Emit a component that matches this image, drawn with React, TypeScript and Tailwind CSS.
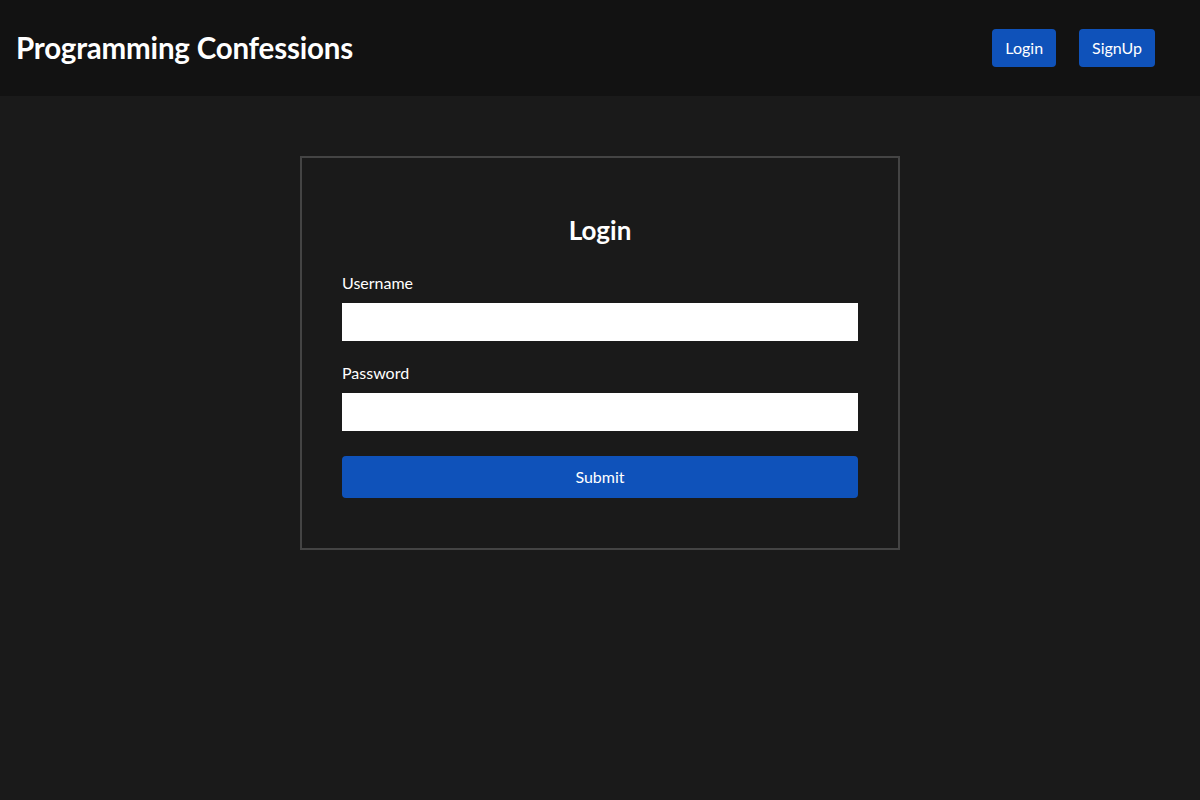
import React, { useState } from 'react';

const App: React.FC = () => {
  const [username, setUsername] = useState('');
  const [password, setPassword] = useState('');

  const handleSubmit = (e: React.FormEvent) => {
    e.preventDefault();
  };

  return (
    <div className="min-h-screen bg-[#1a1a1a] text-white font-['Lato','Liberation_Sans',sans-serif]">
      <header className="h-[96px] bg-[#121212] flex items-center justify-between pl-4 pr-[45px]">
        <h1 className="text-[29.5px] font-bold tracking-[-0.2px]">Programming Confessions</h1>
        <nav className="flex items-center gap-[23px]">
          <button className="h-[38px] px-[13px] rounded bg-[#0f52ba] text-[16px]">Login</button>
          <button className="h-[38px] px-[13px] rounded bg-[#0f52ba] text-[16px]">SignUp</button>
        </nav>
      </header>

      <main className="flex justify-center pt-[60px]">
        <form
          onSubmit={handleSubmit}
          className="w-[600px] border-2 border-[#444] px-10 pt-[52px] pb-[50px]"
        >
          <h2 className="text-[26px] font-bold text-center leading-[40px] mb-[21px]">Login</h2>
          <label className="block text-[16px] leading-[24px] mb-[8px]">Username</label>
          <input
            type="text"
            value={username}
            onChange={(e) => setUsername(e.target.value)}
            className="w-full h-[38px] bg-white text-black px-2 outline-none"
          />
          <label className="block text-[16px] leading-[24px] mt-[20px] mb-[8px]">Password</label>
          <input
            type="password"
            value={password}
            onChange={(e) => setPassword(e.target.value)}
            className="w-full h-[38px] bg-white text-black px-2 outline-none"
          />
          <button
            type="submit"
            className="w-full h-[42px] mt-[25px] rounded bg-[#0f52ba] text-[16px]"
          >
            Submit
          </button>
        </form>
      </main>
    </div>
  );
};

export default App;
